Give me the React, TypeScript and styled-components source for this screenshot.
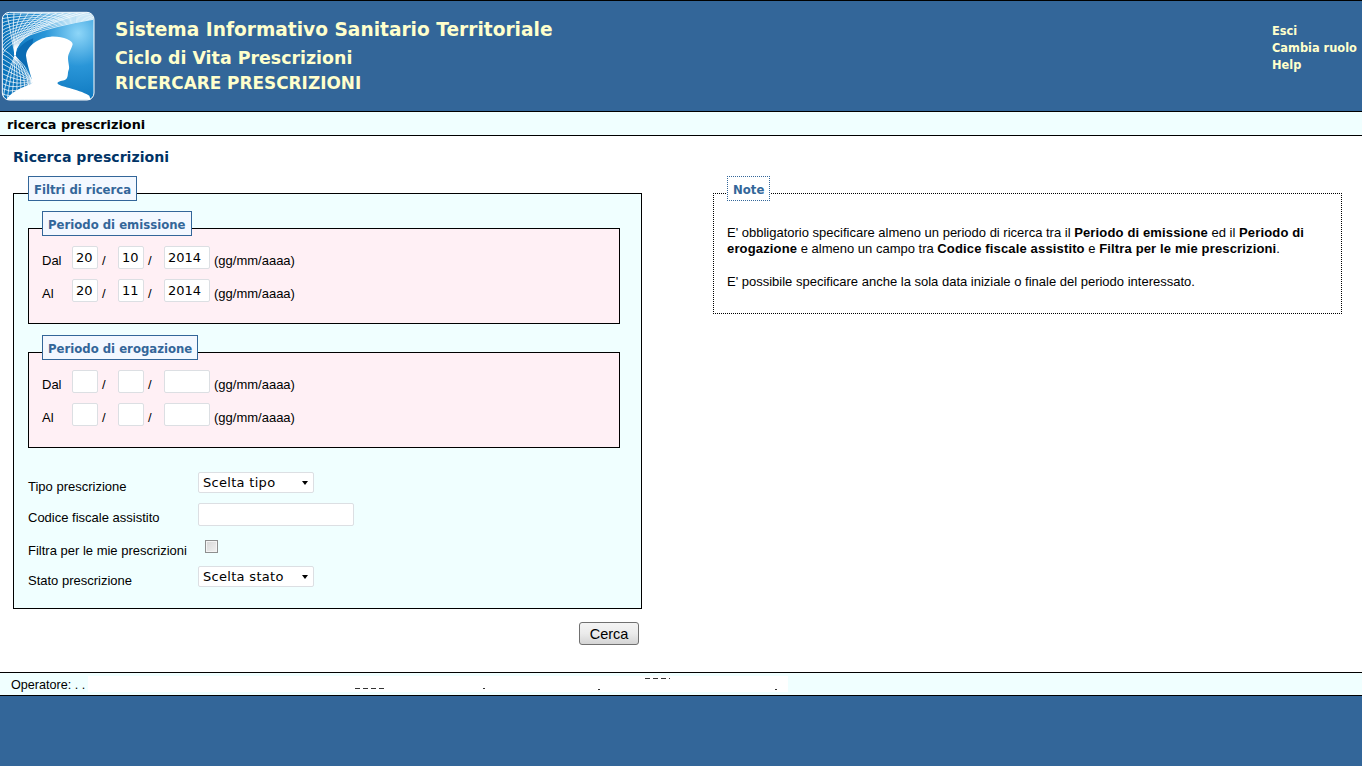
import React from 'react'
import styled, { createGlobalStyle } from 'styled-components'

const GlobalStyle = createGlobalStyle`
  html, body {
    margin: 0;
    padding: 0;
    background: #fff;
    font-family: "Liberation Sans", Arial, sans-serif;
    font-size: 13px;
    color: #000;
  }
`

const Page = styled.div`
  width: 1362px;
  height: 766px;
  display: flex;
  flex-direction: column;
  overflow: hidden;
`

const Header = styled.header`
  height: 110px;
  background: #336699;
  border-top: 1px solid #000;
  border-bottom: 1px solid #000;
  display: flex;
  color: #ffffcc;
  font-family: "DejaVu Sans", Verdana, sans-serif;
`

const LogoBox = styled.div`
  width: 115px;
  padding-top: 4px;
  flex: none;
`

const Titles = styled.div`
  flex: 1;
  padding-top: 17px;
`

const Title = styled.h1`
  margin: 0;
  font-size: 18.6px;
  line-height: 24px;
  font-weight: bold;
`

const SubTitle = styled.h2`
  margin: 5px 0 0;
  font-size: 17.4px;
  line-height: 22px;
  font-weight: bold;
`

const PageName = styled.div`
  margin-top: 3px;
  font-size: 16.9px;
  line-height: 22px;
  font-weight: bold;
`

const HeaderLinks = styled.nav`
  width: 90px;
  padding-top: 22px;
  display: flex;
  flex-direction: column;
  font-size: 11.4px;
  line-height: 17px;
  font-weight: bold;
  white-space: nowrap;
`

const TabBar = styled.div`
  height: 23px;
  background: #f0ffff;
  border-bottom: 1px solid #000;
  padding-left: 7px;
  font-family: "DejaVu Sans", Verdana, sans-serif;
  font-size: 12.8px;
  font-weight: bold;
  line-height: 25px;
`

const Main = styled.main`
  flex: 1;
  padding: 12px 20px 0 13px;
`

const Heading = styled.h3`
  margin: 0 0 10px;
  font-family: "DejaVu Sans", Verdana, sans-serif;
  font-size: 14.1px;
  line-height: 18px;
  font-weight: bold;
  color: #003366;
`

const Columns = styled.div`
  display: flex;
  gap: 71px;
`

const LeftColumn = styled.div`
  width: 629px;
`

const Fieldset = styled.fieldset<{ $bg: string }>`
  margin: 0;
  padding: 0;
  min-width: 0;
  border: 1px solid #000;
  background: ${(p) => p.$bg};
  box-sizing: border-box;
`

// the browser centres the frame line on the legend, so the legend is taller than its tag
const Legend = styled.legend<{ $indent: number }>`
  margin-left: ${(p) => p.$indent}px;
  padding: 0;
  height: 34px;
`

const LegendTag = styled.span<{ $dotted?: boolean }>`
  display: block;
  height: 25px;
  padding: 0 5px;
  box-sizing: border-box;
  background: ${(p) => (p.$dotted ? '#fff' : '#f3f8ff')};
  border: 1px ${(p) => (p.$dotted ? 'dotted' : 'solid')} #336699;
  color: #336699;
  font-family: "DejaVu Sans", Verdana, sans-serif;
  font-size: 11.7px;
  font-weight: bold;
  line-height: 26px;
`

const FilterBody = styled.div`
  padding: 1px 21px 0 14px;
  height: 398px;
  box-sizing: border-box;
`

const PeriodSet = styled(Fieldset)`
  height: 113px;
  margin-bottom: 11px;
`

const PeriodBody = styled.div`
  padding: 1px 0 0 13px;
`

const DateRow = styled.div`
  display: flex;
  align-items: center;
  height: 23px;
  margin-bottom: 10px;
`

const DateLabel = styled.span`
  width: 30px;
  padding-top: 6px;
`

const TextInput = styled.input<{ $w: number }>`
  width: ${(p) => p.$w}px;
  height: 23px;
  box-sizing: border-box;
  padding: 0 0 0 3px;
  border: 1px solid #dcdfe3;
  border-radius: 2px;
  background: #fff;
  font-family: "DejaVu Sans", Verdana, sans-serif;
  font-size: 13px;
  color: #000;
  outline: none;
`

const Slash = styled.span`
  width: 20px;
  padding: 6px 0 0 4px;
  box-sizing: border-box;
`

const Hint = styled.span`
  margin-left: 4px;
  padding-top: 6px;
`

const FormGrid = styled.div`
  margin-top: 19px;
`

const FormRow = styled.div<{ $h: number }>`
  display: grid;
  grid-template-columns: 170px 1fr;
  align-items: center;
  height: ${(p) => p.$h}px;
`

const FieldLabel = styled.label<{ $drop: number }>`
  padding-top: ${(p) => p.$drop}px;
`

const SelectWrap = styled.div`
  position: relative;
  width: 116px;
  height: 21px;
`

const Select = styled.select`
  width: 100%;
  height: 100%;
  appearance: none;
  box-sizing: border-box;
  padding: 0 0 0 4px;
  border: 1px solid #dcdfe3;
  border-radius: 2px;
  background: #fff;
  font-family: "DejaVu Sans", Verdana, sans-serif;
  font-size: 13px;
  letter-spacing: 0.3px;
  color: #000;
  outline: none;
`

const Caret = styled.span`
  position: absolute;
  right: 6px;
  top: 9px;
  border-left: 3.5px solid transparent;
  border-right: 3.5px solid transparent;
  border-top: 4px solid #000;
`

const CheckBox = styled.span`
  display: block;
  width: 13px;
  height: 13px;
  margin-left: 7px;
  box-sizing: border-box;
  border: 1px solid #8e8f8f;
  box-shadow: inset 0 0 0 1px #f4f4f4;
  background: linear-gradient(135deg, #d6d6d6, #f2f2f2);
`

const ButtonRow = styled.div`
  display: flex;
  justify-content: flex-end;
  padding: 13px 3px 0 0;
`

const Button = styled.button`
  width: 60px;
  height: 23px;
  box-sizing: border-box;
  padding: 0;
  border: 1px solid #707070;
  border-radius: 3px;
  background: linear-gradient(#f4f4f4 0, #ebebeb 50%, #d4d4d4 100%);
  font-family: "Liberation Sans", Arial, sans-serif;
  font-size: 14.5px;
  color: #000;
`

const NoteSet = styled.fieldset`
  width: 629px;
  height: 138px;
  box-sizing: border-box;
  margin: 0;
  padding: 0;
  min-width: 0;
  border: 1px dotted #000;
  line-height: 16px;
`

const NoteBody = styled.div`
  padding: 15px 13px 0;

  b {
    letter-spacing: 0.15px;
  }
`

const NoteText = styled.p`
  margin: 0;

  & + & {
    margin-top: 17px;
  }
`

const Footer = styled.div`
  height: 22px;
  position: relative;
  background: #f0ffff;
  border-top: 1px solid #000;
  border-bottom: 1px solid #000;
  padding-left: 11px;
  font-size: 12.6px;
  line-height: 24px;
`

const Blank = styled.span`
  position: absolute;
  left: 88px;
  top: 3px;
  width: 700px;
  height: 16px;
  background: #fff;
`

const Scrap = styled.i<{ $x: number; $y: number; $w: number }>`
  position: absolute;
  left: ${(p) => p.$x}px;
  top: ${(p) => p.$y}px;
  width: ${(p) => p.$w}px;
  height: 1px;
  background: repeating-linear-gradient(90deg, #333 0 5px, transparent 5px 8px);
`

const BottomBand = styled.div`
  height: 70px;
  background: #336699;
`

const range = (n: number, from: number, step: number) => Array.from({ length: n }, (_, i) => from + i * step)

const Logo = () => (
  <svg width="100" height="100" viewBox="0 0 300 300">
    <defs>
      <radialGradient id="logoBg" gradientUnits="userSpaceOnUse" cx="235" cy="85" r="220">
        <stop offset="0" stopColor="#8ed6f8" />
        <stop offset="0.45" stopColor="#2a96d8" />
        <stop offset="1" stopColor="#0a74bc" />
      </radialGradient>
      <clipPath id="logoClip">
        <rect x="8" y="23" width="272" height="260" rx="20" />
      </clipPath>
    </defs>
    <rect x="7" y="22" width="275" height="263" rx="21" fill="url(#logoBg)" stroke="#fff" strokeWidth="3" />
    <path d="M47 150 C55 125 75 110 100 100 L85 190 C65 178 50 165 47 150 Z" fill="#0b6cb4" />
    <g clipPath="url(#logoClip)" fill="none" stroke="#fff" strokeWidth="2.2">
      {range(11, 30, 12).map((y) => (
        <path key={y} d={`M5 ${y} Q35 ${25 + (y - 30) * 0.49} 285 ${24 + (y - 30) * 0.15}`} />
      ))}
      {range(12, 20, 22).map((x) => (
        <path key={x} d={`M${x} 22 Q${32 + x * 0.06} ${90 - x * 0.05} 45 150`} />
      ))}
      {range(11, 130, 15).map((y) => (
        <path key={y} d={`M5 ${y} Q50 ${y + 25} 104 ${236 - (y - 130) * 0.1}`} />
      ))}
      {range(8, 8, 13).map((x) => (
        <path key={x} d={`M45 152 Q${x + 10} 210 ${x} 290`} />
      ))}
    </g>
    <path
      d="M20 284 C28 262 70 246 96 236 C100 226 84 195 78 152 C80 122 118 97 152 95 C188 93 218 106 218 118 C214 134 204 146 204 160 C204 172 210 190 206 195 C202 203 206 214 198 223 C192 229 180 226 172 234 C176 246 232 250 268 272 L272 284 Z"
      fill="#fff"
    />
  </svg>
)

const DateInputs = ({ label, d, m, y }: { label: string; d?: string; m?: string; y?: string }) => (
  <DateRow>
    <DateLabel>{label}</DateLabel>
    <TextInput $w={26} defaultValue={d} />
    <Slash>/</Slash>
    <TextInput $w={26} defaultValue={m} />
    <Slash>/</Slash>
    <TextInput $w={46} defaultValue={y} />
    <Hint>(gg/mm/aaaa)</Hint>
  </DateRow>
)

export default function App() {
  return (
    <Page>
      <GlobalStyle />
      <Header>
        <LogoBox>
          <Logo />
        </LogoBox>
        <Titles>
          <Title>Sistema Informativo Sanitario Territoriale</Title>
          <SubTitle>Ciclo di Vita Prescrizioni</SubTitle>
          <PageName>RICERCARE PRESCRIZIONI</PageName>
        </Titles>
        <HeaderLinks>
          <span>Esci</span>
          <span>Cambia ruolo</span>
          <span>Help</span>
        </HeaderLinks>
      </Header>
      <TabBar>ricerca prescrizioni</TabBar>
      <Main>
        <Heading>Ricerca prescrizioni</Heading>
        <Columns>
          <LeftColumn>
            <Fieldset $bg="#f0ffff">
              <Legend $indent={14}>
                <LegendTag>Filtri di ricerca</LegendTag>
              </Legend>
              <FilterBody>
                <PeriodSet $bg="#fff0f5">
                  <Legend $indent={13}>
                    <LegendTag>Periodo di emissione</LegendTag>
                  </Legend>
                  <PeriodBody>
                    <DateInputs label="Dal" d="20" m="10" y="2014" />
                    <DateInputs label="Al" d="20" m="11" y="2014" />
                  </PeriodBody>
                </PeriodSet>
                <PeriodSet $bg="#fff0f5">
                  <Legend $indent={13}>
                    <LegendTag>Periodo di erogazione</LegendTag>
                  </Legend>
                  <PeriodBody>
                    <DateInputs label="Dal" />
                    <DateInputs label="Al" />
                  </PeriodBody>
                </PeriodSet>
                <FormGrid>
                  <FormRow $h={31}>
                    <FieldLabel $drop={7}>Tipo prescrizione</FieldLabel>
                    <SelectWrap>
                      <Select defaultValue="tipo">
                        <option value="tipo">Scelta tipo</option>
                      </Select>
                      <Caret />
                    </SelectWrap>
                  </FormRow>
                  <FormRow $h={33}>
                    <FieldLabel $drop={5}>Codice fiscale assistito</FieldLabel>
                    <TextInput $w={156} />
                  </FormRow>
                  <FormRow $h={30}>
                    <FieldLabel $drop={9}>Filtra per le mie prescrizioni</FieldLabel>
                    <CheckBox />
                  </FormRow>
                  <FormRow $h={31}>
                    <FieldLabel $drop={7}>Stato prescrizione</FieldLabel>
                    <SelectWrap>
                      <Select defaultValue="stato">
                        <option value="stato">Scelta stato</option>
                      </Select>
                      <Caret />
                    </SelectWrap>
                  </FormRow>
                </FormGrid>
              </FilterBody>
            </Fieldset>
            <ButtonRow>
              <Button>Cerca</Button>
            </ButtonRow>
          </LeftColumn>
          <NoteSet>
            <Legend $indent={13}>
              <LegendTag $dotted>Note</LegendTag>
            </Legend>
            <NoteBody>
              <NoteText>
                E' obbligatorio specificare almeno un periodo di ricerca tra il <b>Periodo di emissione</b> ed il{' '}
                <b>Periodo di erogazione</b> e almeno un campo tra <b>Codice fiscale assistito</b> e{' '}
                <b>Filtra per le mie prescrizioni</b>.
              </NoteText>
              <NoteText>E' possibile specificare anche la sola data iniziale o finale del periodo interessato.</NoteText>
            </NoteBody>
          </NoteSet>
        </Columns>
      </Main>
      <Footer>
        Operatore: . . .
        <Blank />
        <Scrap $x={355} $y={15} $w={30} />
        <Scrap $x={645} $y={5} $w={25} />
        <Scrap $x={483} $y={15} $w={2} />
        <Scrap $x={598} $y={16} $w={2} />
        <Scrap $x={775} $y={16} $w={2} />
      </Footer>
      <BottomBand />
    </Page>
  )
}
